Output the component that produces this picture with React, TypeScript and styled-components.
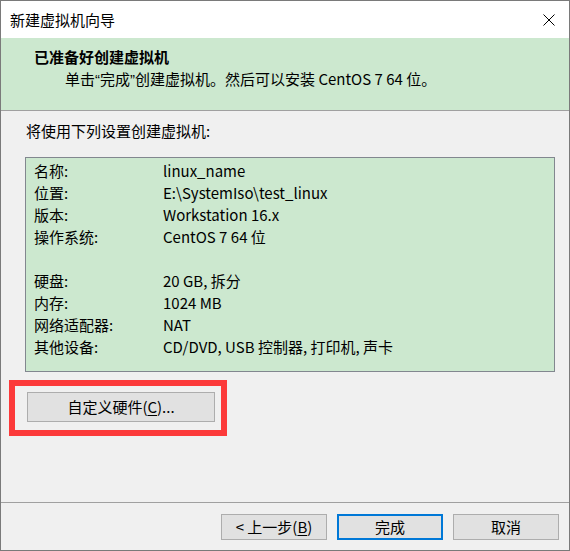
import styled, { createGlobalStyle } from "styled-components";

const GlobalStyle = createGlobalStyle`
  html, body {
    margin: 0;
    padding: 0;
    background: #f0f0f0;
  }
  * {
    box-sizing: border-box;
  }
`;

const settings: { label: string; value: string }[] = [
  { label: "名称:", value: "linux_name" },
  { label: "位置:", value: "E:\\SystemIso\\test_linux" },
  { label: "版本:", value: "Workstation 16.x" },
  { label: "操作系统:", value: "CentOS 7 64 位" },
  { label: "", value: "" },
  { label: "硬盘:", value: "20 GB, 拆分" },
  { label: "内存:", value: "1024 MB" },
  { label: "网络适配器:", value: "NAT" },
  { label: "其他设备:", value: "CD/DVD, USB 控制器, 打印机, 声卡" },
];

const CloseIcon = () => (
  <svg width="12" height="12" viewBox="0 0 12 12">
    <path d="M0.5 0.5 L11.5 11.5 M11.5 0.5 L0.5 11.5" stroke="#000" strokeWidth="1" fill="none" />
  </svg>
);

const App = () => {
  return (
    <>
      <GlobalStyle />
      <Window>
        <TitleBar>
          <TitleText>新建虚拟机向导</TitleText>
          <CloseButton>
            <CloseIcon />
          </CloseButton>
        </TitleBar>
        <Header>
          <HeaderTitle>已准备好创建虚拟机</HeaderTitle>
          <HeaderSub>
            单击<Quote>“</Quote>完成<Quote>”</Quote>创建虚拟机。然后可以安装 CentOS 7 64 位。
          </HeaderSub>
        </Header>
        <Body>
          <Intro>将使用下列设置创建虚拟机:</Intro>
          <SummaryBox>
            {settings.map((row, index) => (
              <SummaryRow key={index}>
                <Label>{row.label}</Label>
                <Value>{row.value}</Value>
              </SummaryRow>
            ))}
          </SummaryBox>
          <CustomizeArea>
            <Button $width={188} $height={30}>
              自定义硬件(<u>C</u>)...
            </Button>
            <Highlight />
          </CustomizeArea>
        </Body>
        <Footer>
          <Button $width={106} $height={26}>
            &lt; 上一步(<u>B</u>)
          </Button>
          <Button $width={106} $height={26} $primary>
            完成
          </Button>
          <Button $width={106} $height={26}>
            取消
          </Button>
        </Footer>
      </Window>
    </>
  );
};

export default App;

const Window = styled.div`
  width: 570px;
  height: 551px;
  display: flex;
  flex-direction: column;
  border: 1px solid #7a7a7a;
  background: #f0f0f0;
  font-family: "Noto Sans CJK SC", sans-serif;
  font-size: 15px;
  color: #000;
`;

const TitleBar = styled.div`
  height: 37px;
  display: flex;
  align-items: center;
  justify-content: space-between;
  padding: 0 14px 0 9px;
  background: #fff;
`;

const TitleText = styled.div`
  font-size: 15px;
  line-height: 20px;
`;

const CloseButton = styled.div`
  width: 12px;
  height: 12px;
  display: flex;
  margin-top: 1px;
`;

const Header = styled.div`
  height: 73px;
  display: flex;
  flex-direction: column;
  padding: 8px 0 0 33px;
  background: #cce8cf;
  border-bottom: 1px solid #a0a0a0;
`;

const HeaderTitle = styled.div`
  font-weight: 700;
  line-height: 22px;
`;

const HeaderSub = styled.div`
  line-height: 22px;
  padding-left: 31px;
`;

const Quote = styled.span`
  font-family: "Liberation Sans", sans-serif;
`;

const Body = styled.div`
  flex: 1;
  display: flex;
  flex-direction: column;
  padding: 9px 14px 0 24px;
`;

const Intro = styled.div`
  line-height: 22px;
  padding-left: 1px;
`;

const SummaryBox = styled.div`
  width: 530px;
  height: 215px;
  margin-top: 15px;
  padding: 2px 8px 0 8px;
  background: #cce8cf;
  border: 1px solid #82878f;
`;

const SummaryRow = styled.div`
  display: grid;
  grid-template-columns: 129px 1fr;
  height: 22px;
  line-height: 22px;
`;

const Label = styled.div`
  white-space: nowrap;
`;

const Value = styled.div`
  white-space: nowrap;
`;

const CustomizeArea = styled.div`
  position: relative;
  margin: 20px 0 0 2px;
  align-self: flex-start;
`;

const Highlight = styled.div`
  position: absolute;
  left: -18px;
  top: -12px;
  width: 218px;
  height: 56px;
  border: 6px solid #fc3a3a;
  pointer-events: none;
`;

const Button = styled.div<{ $width: number; $height: number; $primary?: boolean }>`
  width: ${(p) => p.$width}px;
  height: ${(p) => p.$height}px;
  display: flex;
  align-items: center;
  justify-content: center;
  background: #e1e1e1;
  border: ${(p) => (p.$primary ? "2px solid #0078d7" : "1px solid #adadad")};
  line-height: 20px;
  white-space: nowrap;

  u {
    text-underline-offset: 2px;
  }
`;

const Footer = styled.div`
  display: flex;
  justify-content: flex-end;
  gap: 10px;
  padding: 11px 10px 10px 0;
  border-top: 1px solid #a0a0a0;
`;
